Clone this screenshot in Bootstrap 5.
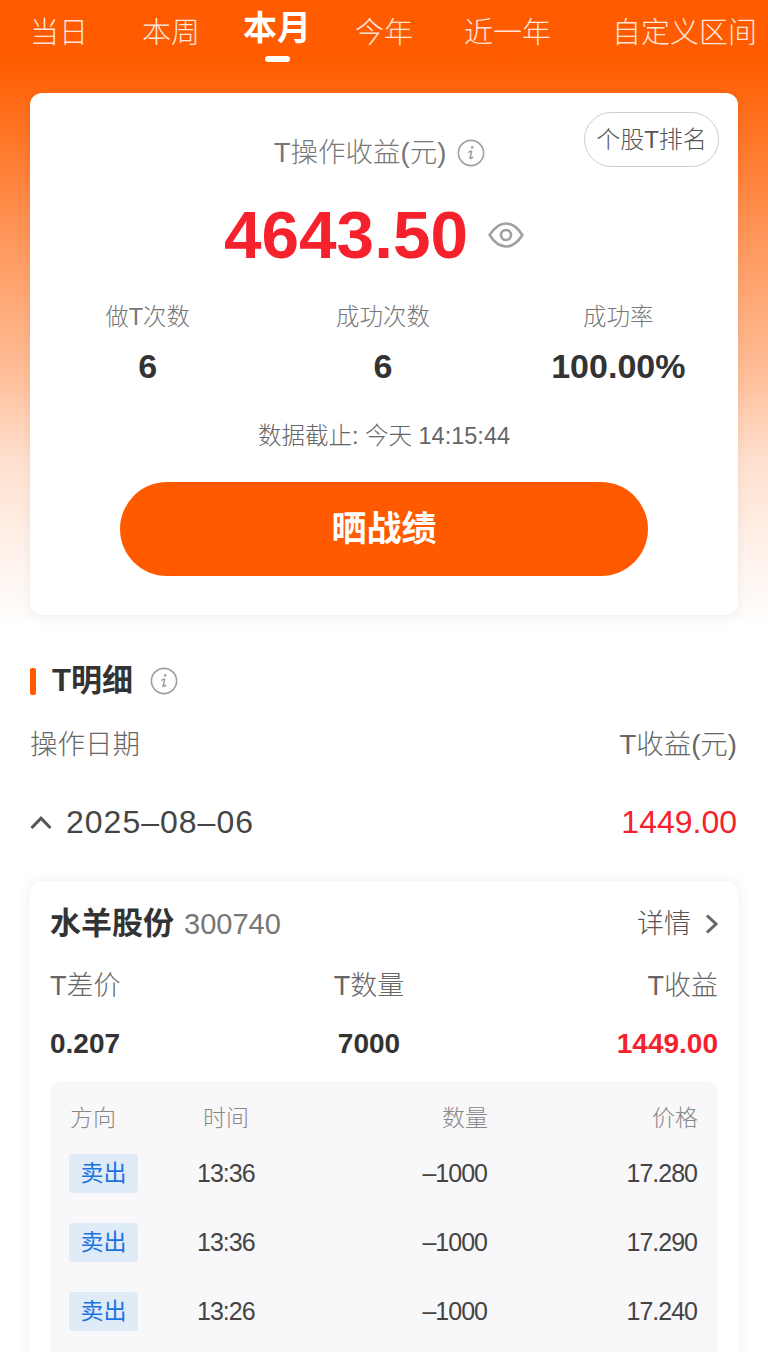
<!DOCTYPE html>
<html lang="zh-CN">
<head>
  <meta charset="utf-8">
  <title>T操作收益</title>
  <meta name="viewport" content="width=device-width, initial-scale=1">
  <link href="https://cdn.jsdelivr.net/npm/bootstrap@5.3.2/dist/css/bootstrap.min.css" rel="stylesheet">
  <style>
    html, body { height: 1352px; overflow: hidden; }
    body {
      font-family: "Liberation Sans", "Noto Sans CJK SC", sans-serif;
      color: #333;
      background: #fff;
    }
    .page-bg { background: linear-gradient(#ff5a00 0, #ff5c00 60px, #ff6a14 100px, #ff9a60 250px, #ffbd96 370px, #ffe0cf 460px, #fff2ea 550px, #fff 630px) no-repeat; background-size: 100% 640px; }

    .tabs { height: 93px; padding-left: 30px; color: #ffe6d8; font-size: 29px; font-weight: 300; }
    .tab { line-height: 32px; margin-top: 17px; white-space: nowrap; }
    .tab:nth-child(2) { margin-left: 54px; }
    .tab:nth-child(3) { margin-left: 43px; }
    .tab:nth-child(4) { margin-left: 44px; }
    .tab:nth-child(5) { margin-left: 51px; }
    .tab:nth-child(6) { margin-left: 61px; }
    .tab-on { color: #fff; font-size: 34px; font-weight: 700; line-height: 38px; margin-top: 9px; }
    .tab-on::after { content: ""; display: block; width: 25px; height: 6px; margin: 9px auto 0; background: #fff; border-radius: 3px; }

    .sum-card { margin: 0 30px; height: 522px; border-radius: 12px; box-shadow: 0 2px 14px rgba(0,0,0,.06); }
    .rank-btn { position: absolute; top: 19px; right: 19px; width: 135px; height: 55px; border: 1px solid #ccc; border-radius: 28px; font-size: 24px; font-weight: 300; color: #555; line-height: 53px; text-align: center; }
    .sum-title { padding-top: 42px; padding-right: 9px; font-size: 27.5px; font-weight: 300; line-height: 36px; color: #777; gap: 11px; }
    .sum-value { margin-top: 28px; height: 72px; gap: 20px; padding-right: 20px; }
    .sum-num { font-size: 67.5px; line-height: 72px; font-weight: 700; color: #f5222d; }
    .stat-row { margin-top: 29px; padding-right: 2px; }
    .stat-col { width: 236px; text-align: center; }
    .stat-label { font-size: 23.5px; font-weight: 300; line-height: 34px; color: #777; }
    .stat-val { margin-top: 13px; font-size: 34px; line-height: 38px; font-weight: 700; color: #333; }
    .sum-time { margin-top: 35px; font-size: 23.5px; font-weight: 300; line-height: 32px; color: #666; text-align: center; }
    .share-btn { display: block; width: 528px; height: 94px; margin: 30px auto 0; border: 0; border-radius: 47px; background: #ff5a00; color: #fff; font-size: 35px; font-weight: 700; }

    .detail-head { margin: 48px 30px 0; height: 36px; }
    .detail-bar { width: 6px; height: 27px; background: #ff5a00; border-radius: 2px; }
    .detail-title { margin-left: 16px; font-size: 31px; font-weight: 700; color: #333; line-height: 36px; }
    .info-sm { margin-left: 17px; }
    .col-head { margin: 28px 31px 0 30px; font-size: 27.5px; font-weight: 300; line-height: 36px; color: #666; }
    .day-row { margin: 39px 31px 0 30px; height: 40px; font-size: 32px; line-height: 40px; color: #444; }
    .day-text { letter-spacing: 1px; }
    .day-chev { margin-right: 14px; }
    .day-amt { color: #f5222d; }

    .stock-card { margin: 39px 30px 0; padding: 21px 20px 0; border-radius: 12px; box-shadow: 0 0 16px rgba(0,0,0,.07); min-height: 600px; }
    .stock-name { font-size: 31px; font-weight: 700; color: #333; line-height: 44px; }
    .stock-code { margin-left: 10px; font-size: 29px; color: #777; line-height: 44px; }
    .stock-more { font-size: 27px; font-weight: 300; color: #555; gap: 14px; line-height: 44px; }
    .t-head { margin-top: 22px; font-size: 27px; font-weight: 300; line-height: 36px; color: #666; }
    .t-vals { margin-top: 22px; font-size: 28px; line-height: 36px; font-weight: 700; color: #333; }
    .t-c1 { width: 240px; }
    .t-c2 { width: 158px; text-align: center; }
    .t-c3 { flex: 1; text-align: right; }
    .t-red { color: #f5222d; }

    .trade-box { margin-top: 19px; padding: 18px 20px 0; background: #f8f8fb; border-radius: 12px; min-height: 400px; }
    .trade-head { font-size: 23px; font-weight: 300; line-height: 38px; color: #888; margin-bottom: 2px; }
    .trade-head .w-time { padding-left: 6px; }
    .trade-row { height: 69px; font-size: 25px; letter-spacing: -1px; color: #444; }
    .trade-row .w-qty, .trade-row .w-price { padding-right: 1px; }
    .w-dir { width: 127px; }
    .w-time { width: 120px; text-align: left; }
    .w-qty { width: 171px; text-align: right; }
    .w-price { flex: 1; text-align: right; }
    .sell-tag { display: inline-block; width: 69px; height: 39px; margin-left: -1px; background: #e0ebf8; color: #1a73e0; font-size: 23px; letter-spacing: 0; line-height: 39px; text-align: center; border-radius: 4px; }
  </style>
</head>
<body>
<div class="page-bg">

  <div class="tabs d-flex align-items-start">
    <div class="tab">当日</div>
    <div class="tab">本周</div>
    <div class="tab tab-on">本月</div>
    <div class="tab">今年</div>
    <div class="tab">近一年</div>
    <div class="tab">自定义区间</div>
  </div>

  <div class="sum-card bg-white position-relative">
    <div class="rank-btn">个股T排名</div>
    <div class="sum-title d-flex justify-content-center align-items-center">
      <span>T操作收益(元)</span>
      <svg width="28" height="28" viewBox="0 0 28 28" fill="none" stroke="#a0a0a0" stroke-width="1.6"><circle cx="14" cy="14" r="12.6"/><circle cx="15.2" cy="8.4" r="1.3" fill="#a0a0a0" stroke="none"/><path d="M11.800 13.200c1-1 2.600-1.400 2.800-.6l-1.500 6.400c-.2.900 1.300.6 2.500-.6" stroke-linecap="round" stroke-linejoin="round"/></svg>
    </div>
    <div class="sum-value d-flex justify-content-center align-items-center">
      <span class="sum-num">4643.50</span>
      <svg width="36" height="26" viewBox="0 0 36 26" fill="none" stroke="#a0a0a0" stroke-width="2.6"><path d="M1.600 13C7 4.500 12 1.500 18 1.500S29 4.500 34.400 13C29 21.500 24 24.500 18 24.500S7 21.500 1.600 13z" stroke-linejoin="round"/><circle cx="18" cy="13" r="5"/></svg>
    </div>
    <div class="stat-row d-flex justify-content-center">
      <div class="stat-col"><div class="stat-label">做T次数</div><div class="stat-val">6</div></div>
      <div class="stat-col"><div class="stat-label">成功次数</div><div class="stat-val">6</div></div>
      <div class="stat-col"><div class="stat-label">成功率</div><div class="stat-val">100.00%</div></div>
    </div>
    <div class="sum-time">数据截止: 今天 14:15:44</div>
    <button type="button" class="share-btn">晒战绩</button>
  </div>

  <div class="detail-head d-flex align-items-center">
    <span class="detail-bar"></span>
    <span class="detail-title">T明细</span>
    <svg class="info-sm" width="28" height="28" viewBox="0 0 28 28" fill="none" stroke="#a0a0a0" stroke-width="1.6"><circle cx="14" cy="14" r="12.6"/><circle cx="15.2" cy="8.4" r="1.3" fill="#a0a0a0" stroke="none"/><path d="M11.800 13.200c1-1 2.600-1.400 2.800-.6l-1.500 6.400c-.2.900 1.300.6 2.500-.6" stroke-linecap="round" stroke-linejoin="round"/></svg>
  </div>

  <div class="col-head d-flex justify-content-between">
    <span>操作日期</span>
    <span>T收益(元)</span>
  </div>

  <div class="day-row d-flex justify-content-between align-items-center">
    <span class="d-flex align-items-center day-text">
      <svg class="day-chev" width="22" height="13" viewBox="0 0 22 13" fill="none" stroke="#555" stroke-width="3"><path d="M1.500 12L11 2.200 20.500 12"/></svg>
      2025–08–06
    </span>
    <span class="day-amt">1449.00</span>
  </div>

  <div class="stock-card bg-white">
    <div class="d-flex justify-content-between align-items-center">
      <div><span class="stock-name">水羊股份</span><span class="stock-code">300740</span></div>
      <div class="stock-more d-flex align-items-center">
        <span>详情</span>
        <svg width="13" height="20" viewBox="0 0 13 20" fill="none" stroke="#666" stroke-width="3"><path d="M2 1.500L11 10l-9 8.500"/></svg>
      </div>
    </div>
    <div class="t-head d-flex">
      <div class="t-c1">T差价</div><div class="t-c2">T数量</div><div class="t-c3">T收益</div>
    </div>
    <div class="t-vals d-flex">
      <div class="t-c1">0.207</div><div class="t-c2">7000</div><div class="t-c3 t-red">1449.00</div>
    </div>

    <div class="trade-box">
      <div class="trade-head d-flex">
        <div class="w-dir">方向</div><div class="w-time">时间</div><div class="w-qty">数量</div><div class="w-price">价格</div>
      </div>
      <div class="trade-row d-flex align-items-center">
        <div class="w-dir"><span class="sell-tag">卖出</span></div><div class="w-time">13:36</div><div class="w-qty">–1000</div><div class="w-price">17.280</div>
      </div>
      <div class="trade-row d-flex align-items-center">
        <div class="w-dir"><span class="sell-tag">卖出</span></div><div class="w-time">13:36</div><div class="w-qty">–1000</div><div class="w-price">17.290</div>
      </div>
      <div class="trade-row d-flex align-items-center">
        <div class="w-dir"><span class="sell-tag">卖出</span></div><div class="w-time">13:26</div><div class="w-qty">–1000</div><div class="w-price">17.240</div>
      </div>
    </div>
  </div>

</div>
<script src="https://cdn.jsdelivr.net/npm/bootstrap@5.3.2/dist/js/bootstrap.bundle.min.js"></script>
</body>
</html>
